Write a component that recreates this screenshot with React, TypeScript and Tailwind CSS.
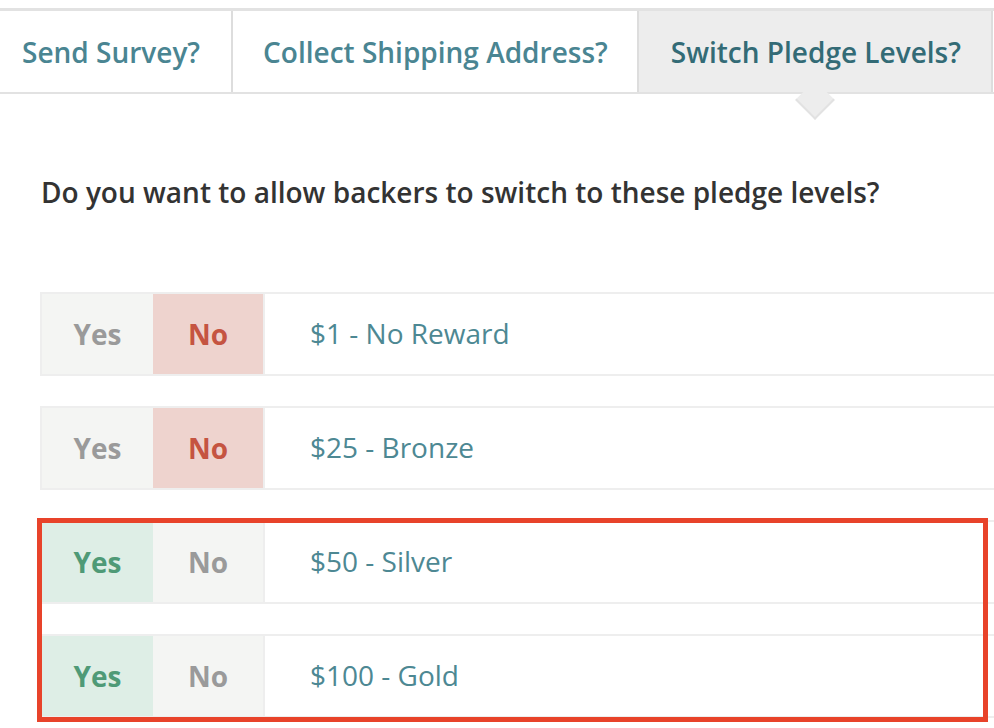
import React from 'react';

type Level = { label: string; allowed: boolean };

const levels: Level[] = [
  { label: '$1 - No Reward', allowed: false },
  { label: '$25 - Bronze', allowed: false },
  { label: '$50 - Silver', allowed: true },
  { label: '$100 - Gold', allowed: true },
];

function Tab({ label, active, className }: { label: string; active?: boolean; className?: string }) {
  return (
    <div
      className={`relative flex shrink-0 items-center h-full text-[28px] font-semibold border-r-2 border-[#dddddd] ${
        active ? 'bg-[#ededed] text-[#336b76]' : 'bg-white text-[#4a8592]'
      } ${className ?? ''}`}
    >
      {label}
      {active && (
        <div className="absolute left-1/2 -bottom-[22px] -ml-[14px] w-[28px] h-[28px] rotate-45 bg-[#ededed] border-r-2 border-b-2 border-[#e2e2e2]" />
      )}
    </div>
  );
}

function LevelRow({ level }: { level: Level }) {
  return (
    <div className="flex h-[84px] w-[980px] border-2 border-[#eeeeee] bg-white">
      <div
        className={`w-[111px] flex items-center justify-center text-[28px] font-bold ${
          level.allowed ? 'bg-[#deeee6] text-[#4f9a77]' : 'bg-[#f4f5f3] text-[#9a9a9a]'
        }`}
      >
        Yes
      </div>
      <div
        className={`w-[112px] flex items-center justify-center text-[28px] font-bold border-r-2 border-[#eeeeee] ${
          level.allowed ? 'bg-[#f4f5f3] text-[#9a9a9a]' : 'bg-[#eed3ce] text-[#c55441]'
        }`}
      >
        No
      </div>
      <div className="flex items-center pl-[45px] pb-[2px] text-[28px] text-[#4d8893]">{level.label}</div>
    </div>
  );
}

export default function App() {
  return (
    <div
      className="relative w-[994px] h-[728px] overflow-hidden bg-white"
      style={{ fontFamily: '"Open Sans", "Noto Sans", sans-serif' }}
    >
      <div className="h-[8px]" />
      <div className="flex h-[86px] border-t-[3px] border-b-2 border-[#e2e2e2] w-[1100px]">
        <Tab label="Send Survey?" className="pl-[22px] pr-[31px]" />
        <Tab label="Collect Shipping Address?" className="pl-[30px] pr-[29px]" />
        <Tab label="Switch Pledge Levels?" active className="pl-[32px] pr-[30px]" />
        <Tab label="" className="w-[60px]" />
      </div>

      <div className="pl-[41px] pt-[80px] pb-[82px]">
        <h2 className="text-[28px] leading-[36px] font-semibold text-[#333333]">
          Do you want to allow backers to switch to these pledge levels?
        </h2>
      </div>

      <div className="flex flex-col gap-[30px] pl-[40px]">
        {levels.map((l) => (
          <LevelRow key={l.label} level={l} />
        ))}
      </div>

      {/* highlight annotation */}
      <div className="absolute left-[37px] top-[518px] w-[951px] h-[204px] border-[5px] border-[#e8432a]" />
    </div>
  );
}
